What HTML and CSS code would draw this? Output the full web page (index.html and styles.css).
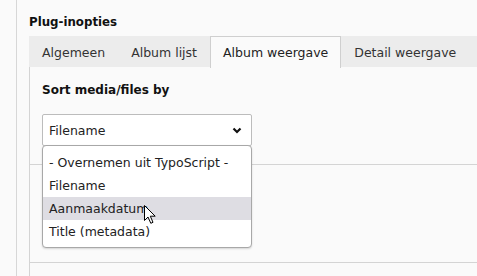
FILE: index.html
```html
<!DOCTYPE html>
<html lang="nl">
<head>
  <meta charset="UTF-8" />
  <title>Plug-inopties</title>
  <link rel="stylesheet" href="styles.css">
</head>
<body>
  <div class="frame">
    <h2 class="title">Plug-inopties</h2>

    <div class="tabs">
      <div class="tab">Algemeen</div>
      <div class="tab">Album lijst</div>
      <div class="tab active">Album weergave</div>
      <div class="tab">Detail weergave</div>
    </div>

    <div class="panel">
      <div class="section">
        <label class="field-label">Sort media/files by</label>
        <div class="select-wrap">
          <div class="select">
            <span>Filename</span>
            <svg class="chevron" width="10" height="7" viewBox="0 0 10 7">
              <path d="M1.5 1.5 L5 5 L8.5 1.5" fill="none" stroke="#111" stroke-width="2.2"/>
            </svg>
          </div>
          <ul class="dropdown">
            <li>- Overnemen uit TypoScript -</li>
            <li>Filename</li>
            <li class="hover">Aanmaakdatum</li>
            <li>Title (metadata)</li>
          </ul>
          <svg class="cursor" width="13" height="20" viewBox="0 0 13 20">
            <path d="M0.5 0.5 L0.5 15.5 L4 12 L6.8 18.3 L9 17.3 L6.3 11.2 L11.2 11.2 Z" fill="#fff" stroke="#000" stroke-width="1" stroke-linejoin="round"/>
          </svg>
        </div>
      </div>
      <div class="section"></div>
      <div class="section"></div>
    </div>
  </div>
</body>
</html>
```

FILE: styles.css
```css
body {
  margin: 0;
  background: #fafafa;
  font-family: 'DejaVu Sans', Verdana, sans-serif;
  font-size: 12px;
  color: #333;
}
.frame {
  margin-left: 16px;
  border-left: 1px solid #d7d7d7;
  padding-left: 12px;
  height: 276px;
  overflow: hidden;
}
.title {
  margin: 0;
  padding-top: 15px;
  height: 21px;
  font-size: 11.8px;
  font-weight: bold;
  color: #111;
  line-height: 15px;
}
.tabs {
  display: flex;
  background: #ececec;
  height: 31px;
  margin-bottom: -1px;
  position: relative;
  z-index: 1;
  font-size: 12.5px;
}
.tab {
  flex-shrink: 0;
  white-space: nowrap;
  padding: 0 12px;
  line-height: 31px;
  border: 1px solid transparent;
  border-bottom: none;
  color: #333;
}
.tab.active {
  background: #fafafa;
  border-color: #cfcfcf;
  color: #222;
  height: 31px;
}
.panel {
  border-left: 1px solid #d4d4d4;
  border-top: 1px solid #d4d4d4;
}
.section {
  height: 97px;
  border-bottom: 1px solid #d4d4d4;
  padding: 0 12px;
}
.section:first-child {
  padding-top: 16px;
  height: 81px;
}
.field-label {
  display: block;
  font-weight: bold;
  color: #111;
  line-height: 14px;
  margin-bottom: 17px;
}
.select-wrap {
  position: relative;
  width: 210px;
}
.select {
  display: flex;
  align-items: center;
  justify-content: space-between;
  height: 30px;
  padding: 0 9px 0 6px;
  border: 1px solid #bcbcbc;
  border-radius: 2px;
  background: #fff;
  color: #222;
  font-size: 12.5px;
}
.chevron {
  display: block;
}
.dropdown {
  position: absolute;
  top: 31px;
  left: 0;
  width: 210px;
  box-sizing: border-box;
  margin: 0;
  padding: 5px 0 4px;
  list-style: none;
  background: #fff;
  border: 1px solid #a8a8a8;
  border-radius: 4px;
  box-shadow: 0 1px 2px rgba(0, 0, 0, 0.15);
  z-index: 2;
  font-size: 12.5px;
}
.dropdown li {
  height: 23px;
  line-height: 24px;
  padding-left: 6px;
  color: #222;
}
.dropdown li.hover {
  background: #dedde3;
}
.cursor {
  position: absolute;
  left: 102px;
  top: 91px;
  z-index: 3;
}
```
